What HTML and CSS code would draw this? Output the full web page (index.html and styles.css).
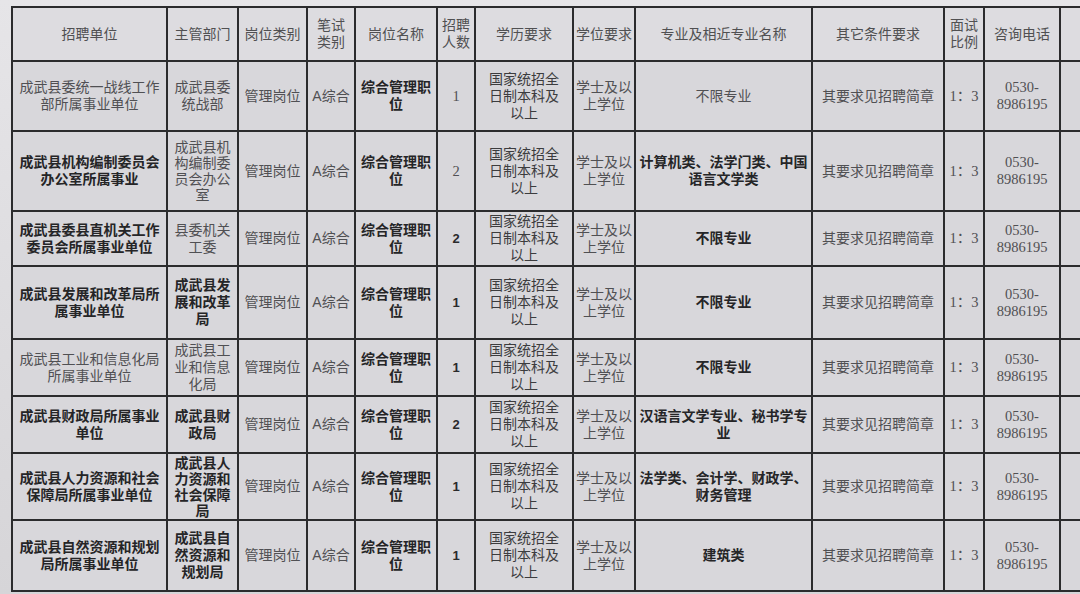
FILE: index.html
```html
<!DOCTYPE html>
<html lang="zh-CN">
<head>
<meta charset="utf-8">
<title>招聘岗位表</title>
<link rel="stylesheet" href="styles.css">
</head>
<body>
<div class="sheet">
<table class="grid">
  <colgroup>
    <col class="c-unit"><col class="c-dept"><col class="c-type"><col class="c-exam"><col class="c-name"><col class="c-num"><col class="c-edu"><col class="c-deg"><col class="c-major"><col class="c-other"><col class="c-ratio"><col class="c-tel"><col class="c-extra">
  </colgroup>
  <tr class="r-head">
    <th>招聘单位</th><th>主管部门</th><th>岗位类别</th><th>笔试<br>类别</th><th>岗位名称</th><th>招聘<br>人数</th><th>学历要求</th><th>学位要求</th><th>专业及相近专业名称</th><th>其它条件要求</th><th>面试<br>比例</th><th>咨询电话</th><th></th>
  </tr>
  <tr class="r1">
    <td class="light">成武县委统一战线工作<br>部所属事业单位</td>
    <td class="light">成武县委<br>统战部</td>
    <td class="light">管理岗位</td>
    <td class="light">A综合</td>
    <td class="strong">综合管理职<br>位</td>
    <td class="num light">1</td>
    <td>国家统招全<br>日制本科及<br>以上</td>
    <td class="light">学士及以<br>上学位</td>
    <td class="light">不限专业</td>
    <td class="light">其要求见招聘简章</td>
    <td class="num light">1：3</td>
    <td class="num light">0530-<br>8986195</td>
    <td></td>
  </tr>
  <tr class="r2">
    <td class="strong">成武县机构编制委员会<br>办公室所属事业</td>
    <td class="light tight">成武县机<br>构编制委<br>员会办公<br>室</td>
    <td class="light">管理岗位</td>
    <td class="light">A综合</td>
    <td class="strong">综合管理职<br>位</td>
    <td class="num light">2</td>
    <td>国家统招全<br>日制本科及<br>以上</td>
    <td class="light">学士及以<br>上学位</td>
    <td class="strong">计算机类、法学门类、中国<br>语言文学类</td>
    <td class="light">其要求见招聘简章</td>
    <td class="num light">1：3</td>
    <td class="num light">0530-<br>8986195</td>
    <td></td>
  </tr>
  <tr class="r3">
    <td class="strong">成武县委县直机关工作<br>委员会所属事业单位</td>
    <td class="light">县委机关<br>工委</td>
    <td class="light">管理岗位</td>
    <td class="light">A综合</td>
    <td class="strong">综合管理职<br>位</td>
    <td class="num bold">2</td>
    <td>国家统招全<br>日制本科及<br>以上</td>
    <td class="light">学士及以<br>上学位</td>
    <td class="strong">不限专业</td>
    <td class="light">其要求见招聘简章</td>
    <td class="num light">1：3</td>
    <td class="num light">0530-<br>8986195</td>
    <td></td>
  </tr>
  <tr class="r4">
    <td class="strong">成武县发展和改革局所<br>属事业单位</td>
    <td class="strong">成武县发<br>展和改革<br>局</td>
    <td class="light">管理岗位</td>
    <td class="light">A综合</td>
    <td class="strong">综合管理职<br>位</td>
    <td class="num bold">1</td>
    <td>国家统招全<br>日制本科及<br>以上</td>
    <td class="light">学士及以<br>上学位</td>
    <td class="strong">不限专业</td>
    <td class="light">其要求见招聘简章</td>
    <td class="num light">1：3</td>
    <td class="num light">0530-<br>8986195</td>
    <td></td>
  </tr>
  <tr class="r5">
    <td class="light">成武县工业和信息化局<br>所属事业单位</td>
    <td class="light">成武县工<br>业和信息<br>化局</td>
    <td class="light">管理岗位</td>
    <td class="light">A综合</td>
    <td class="strong">综合管理职<br>位</td>
    <td class="num bold">1</td>
    <td>国家统招全<br>日制本科及<br>以上</td>
    <td class="light">学士及以<br>上学位</td>
    <td class="strong">不限专业</td>
    <td class="light">其要求见招聘简章</td>
    <td class="num light">1：3</td>
    <td class="num light">0530-<br>8986195</td>
    <td></td>
  </tr>
  <tr class="r6">
    <td class="strong">成武县财政局所属事业<br>单位</td>
    <td class="strong">成武县财<br>政局</td>
    <td class="light">管理岗位</td>
    <td class="light">A综合</td>
    <td class="strong">综合管理职<br>位</td>
    <td class="num bold">2</td>
    <td>国家统招全<br>日制本科及<br>以上</td>
    <td class="light">学士及以<br>上学位</td>
    <td class="strong">汉语言文学专业、秘书学专<br>业</td>
    <td class="light">其要求见招聘简章</td>
    <td class="num light">1：3</td>
    <td class="num light">0530-<br>8986195</td>
    <td></td>
  </tr>
  <tr class="r7">
    <td class="strong">成武县人力资源和社会<br>保障局所属事业单位</td>
    <td class="strong tight">成武县人<br>力资源和<br>社会保障<br>局</td>
    <td class="light">管理岗位</td>
    <td class="light">A综合</td>
    <td class="strong">综合管理职<br>位</td>
    <td class="num bold">1</td>
    <td>国家统招全<br>日制本科及<br>以上</td>
    <td class="light">学士及以<br>上学位</td>
    <td class="strong">法学类、会计学、财政学、<br>财务管理</td>
    <td class="light">其要求见招聘简章</td>
    <td class="num light">1：3</td>
    <td class="num light">0530-<br>8986195</td>
    <td></td>
  </tr>
  <tr class="r8">
    <td class="strong">成武县自然资源和规划<br>局所属事业单位</td>
    <td class="strong">成武县自<br>然资源和<br>规划局</td>
    <td class="light">管理岗位</td>
    <td class="light">A综合</td>
    <td class="strong">综合管理职<br>位</td>
    <td class="num bold">1</td>
    <td>国家统招全<br>日制本科及<br>以上</td>
    <td class="light">学士及以<br>上学位</td>
    <td class="strong">建筑类</td>
    <td class="light">其要求见招聘简章</td>
    <td class="num light">1：3</td>
    <td class="num light">0530-<br>8986195</td>
    <td></td>
  </tr>
</table>
</div>
</body>
</html>
```

FILE: styles.css
```css
html, body {
  margin: 0;
  padding: 0;
}
body {
  width: 1080px;
  height: 594px;
  overflow: hidden;
  background: linear-gradient(180deg, #e6e5e8 0%, #dcdbde 60%, #d6d5d8 100%);
  font-family: "Liberation Sans", "Noto Sans CJK SC", sans-serif;
  color: #3c3c3e;
}
.sheet {
  padding: 6px 0 0 11px;
}
.grid {
  border-collapse: collapse;
  table-layout: fixed;
  width: 1088px;
  background: #d8d7db;
}
.c-unit { width: 155px; }
.c-dept { width: 71px; }
.c-type { width: 69px; }
.c-exam { width: 48px; }
.c-name { width: 82px; }
.c-num { width: 38px; }
.c-edu { width: 98px; }
.c-deg { width: 62px; }
.c-major { width: 177px; }
.c-other { width: 132px; }
.c-ratio { width: 40px; }
.c-tel { width: 76px; }
.c-extra { width: 40px; }

.grid th, .grid td {
  border: 2px solid #2b2b2d;
  padding: 0;
  text-align: center;
  vertical-align: middle;
  font-size: 14px;
  line-height: 17px;
  white-space: nowrap;
  overflow: hidden;
}
.grid td.tight {
  line-height: 16px;
}
.grid th {
  font-weight: 400;
  color: #505052;
  background: #dddce0;
}
.r-head { height: 54px; }
.r1 { height: 70px; }
.r2 { height: 80px; }
.r3 { height: 55px; }
.r4 { height: 73px; }
.r5 { height: 57px; }
.r6 { height: 57px; }
.r7 { height: 67px; }
.r8 { height: 71px; }

.light {
  font-weight: 400;
  color: #505053;
}
.strong {
  font-weight: 700;
  color: #252527;
}
.grid td.num {
  font-family: "Liberation Serif", "Noto Sans CJK SC", serif;
  font-size: 14.5px;
}
.grid td.num.bold {
  font-family: "Liberation Sans", "Noto Sans CJK SC", sans-serif;
  font-weight: 700;
  color: #2a2a2c;
  font-size: 13px;
}
```
